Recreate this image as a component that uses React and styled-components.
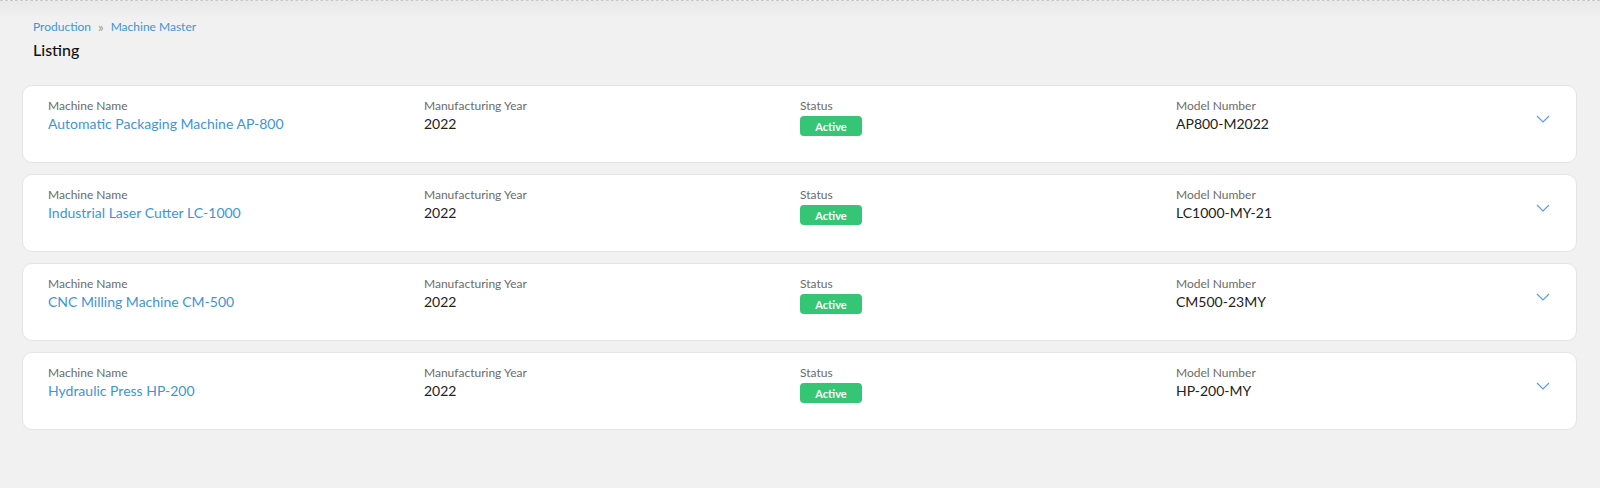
import React from 'react'
import styled, { createGlobalStyle } from 'styled-components'

const Global = createGlobalStyle`
  html, body {
    margin: 0;
    padding: 0;
    background: #f1f1f1;
  }
  body {
    font-family: Lato, "Noto Sans", sans-serif;
    color: #222;
  }
`

const Page = styled.div`
  min-height: 488px;
  border-top: 1px dashed #c9c9c9;
  background: linear-gradient(#e9e9e9, #f1f1f1 18px);
  box-sizing: border-box;
`

const Header = styled.div`
  padding: 18px 33px 0;
`

const Crumbs = styled.div`
  display: flex;
  align-items: center;
  gap: 7px;
  font-size: 12px;
  color: #3d95d8;
`

const CrumbSep = styled.span`
  color: #9a9a9a;
  font-size: 13px;
  line-height: 12px;
`

const Title = styled.h1`
  margin: 6px 0 0;
  font-size: 16px;
  font-weight: 500;
  color: #111;
`

const List = styled.div`
  display: flex;
  flex-direction: column;
  gap: 11px;
  padding: 26px 23px 0 22px;
`

const Card = styled.div`
  display: flex;
  align-items: flex-start;
  height: 78px;
  box-sizing: border-box;
  padding: 13px 26px 0 25px;
  background: #fff;
  border: 1px solid #e4e4e4;
  border-radius: 10px;
`

const Cols = styled.div`
  flex: 1;
  display: grid;
  grid-template-columns: repeat(3, 376px) 1fr;
`

const Field = styled.div`
  display: flex;
  flex-direction: column;
  gap: 2px;
`

const Label = styled.span`
  font-size: 12px;
  color: #6b6b6b;
  line-height: 14px;
`

const Value = styled.span`
  font-size: 14px;
  line-height: 18px;
  color: ${p => (p.$link ? '#3d95d8' : '#222')};
`

const Badge = styled.span`
  display: inline-flex;
  align-items: center;
  justify-content: center;
  margin-top: 1px;
  width: 62px;
  height: 20px;
  border-radius: 4px;
  background: #34c674;
  color: #fff;
  font-size: 11px;
  font-weight: 700;
`

const Toggle = styled.button`
  border: 0;
  background: none;
  padding: 0;
  margin-top: 16px;
  display: flex;
  cursor: pointer;
`

const machines = [
  { name: 'Automatic Packaging Machine AP-800', year: '2022', model: 'AP800-M2022' },
  { name: 'Industrial Laser Cutter LC-1000', year: '2022', model: 'LC1000-MY-21' },
  { name: 'CNC Milling Machine CM-500', year: '2022', model: 'CM500-23MY' },
  { name: 'Hydraulic Press HP-200', year: '2022', model: 'HP-200-MY' },
]

const Chevron = () => (
  <svg width="14" height="8" viewBox="0 0 14 8" fill="none">
    <path d="M1 1l6 6 6-6" stroke="#5a9cf0" strokeWidth="1.2" />
  </svg>
)

const App = () => (
  <Page>
    <Global />
    <Header>
      <Crumbs>
        <span>Production</span>
        <CrumbSep>»</CrumbSep>
        <span>Machine Master</span>
      </Crumbs>
      <Title>Listing</Title>
    </Header>
    <List>
      {machines.map(m => (
        <Card key={m.model}>
          <Cols>
            <Field>
              <Label>Machine Name</Label>
              <Value $link>{m.name}</Value>
            </Field>
            <Field>
              <Label>Manufacturing Year</Label>
              <Value>{m.year}</Value>
            </Field>
            <Field>
              <Label>Status</Label>
              <Badge>Active</Badge>
            </Field>
            <Field>
              <Label>Model Number</Label>
              <Value>{m.model}</Value>
            </Field>
          </Cols>
          <Toggle aria-label="expand">
            <Chevron />
          </Toggle>
        </Card>
      ))}
    </List>
  </Page>
)

export default App
